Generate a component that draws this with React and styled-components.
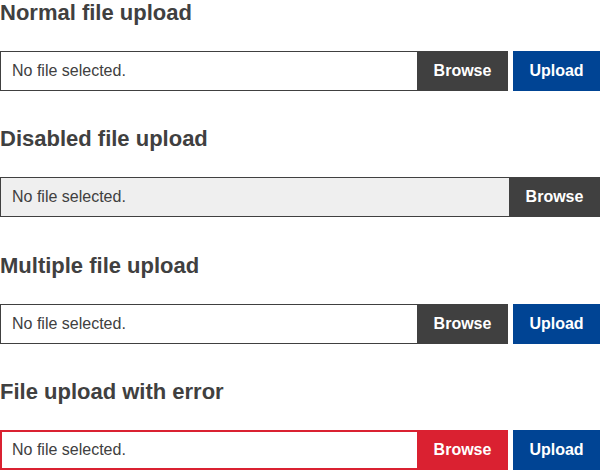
import React from "react";
import styled, { createGlobalStyle, css } from "styled-components";

const Global = createGlobalStyle`
  html, body { margin: 0; padding: 0; background: #ffffff; }
  body { font-family: "Liberation Sans", Arial, sans-serif; color: #404040; }
`;

const Page = styled.div`
  display: flex;
  flex-direction: column;
  gap: 35.33px;
  width: 600px;
`;

const Section = styled.section`
  display: flex;
  flex-direction: column;
`;

const Heading = styled.h3`
  margin: 0 0 24.6px 0;
  font-size: 22px;
  line-height: 26.4px;
  font-weight: 700;
  color: #404040;
`;

const Row = styled.div`
  display: flex;
  height: 40px;
  gap: 5px;
`;

const Field = styled.div`
  flex: 1;
  display: flex;
  min-width: 0;
`;

const Label = styled.div`
  flex: 1;
  display: flex;
  align-items: center;
  box-sizing: border-box;
  padding: 0 0 0 11px;
  border: 1px solid #404040;
  border-right: none;
  background: #ffffff;
  font-size: 16px;
  color: #404040;
  ${(p) =>
    p.$disabled &&
    css`
      background: #efefef;
    `}
  ${(p) =>
    p.$error &&
    css`
      border: 2px solid #da2131;
      border-right: none;
      padding-left: 10px;
    `}
`;

const Button = styled.button`
  box-sizing: border-box;
  height: 40px;
  border: none;
  margin: 0;
  padding: 0;
  width: ${(p) => p.$w}px;
  font-family: "Liberation Sans", Arial, sans-serif;
  font-size: 16px;
  font-weight: 700;
  color: #ffffff;
  background: ${(p) => p.$bg};
  cursor: pointer;
`;

const sections = [
  { title: "Normal file upload", upload: true },
  { title: "Disabled file upload", disabled: true },
  { title: "Multiple file upload", upload: true },
  { title: "File upload with error", upload: true, error: true },
];

export default function App() {
  return (
    <>
      <Global />
      <Page>
        {sections.map((s) => (
          <Section key={s.title}>
            <Heading>{s.title}</Heading>
            <Row>
              <Field>
                <Label $disabled={s.disabled} $error={s.error}>
                  No file selected.
                </Label>
                <Button $w={91} $bg={s.error ? "#da2131" : "#404040"}>
                  Browse
                </Button>
              </Field>
              {s.upload && (
                <Button $w={87} $bg="#004494">
                  Upload
                </Button>
              )}
            </Row>
          </Section>
        ))}
      </Page>
    </>
  );
}
